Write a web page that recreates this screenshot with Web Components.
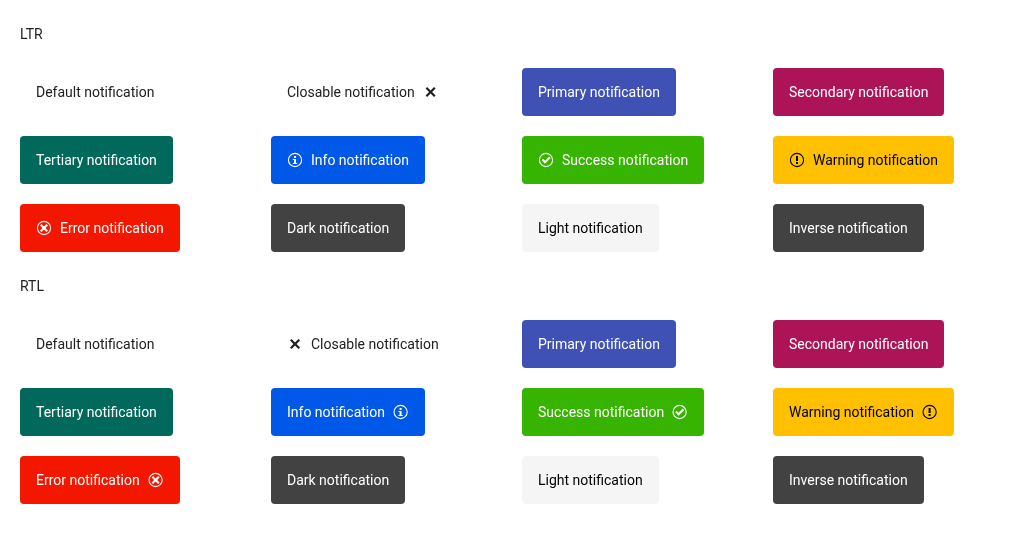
<!DOCTYPE html>
<html lang="en"><head><meta charset="utf-8"><title>Notifications</title>
<style>body{margin:0;background:#fff}</style></head><body>
<notification-demo></notification-demo>
<script>
const ring='<circle cx="8" cy="8" r="6.600" fill="none" stroke="currentColor" stroke-width="1.100"/>';
const icons={
info:'<path d="M7 4h2v2H7zM10.200 12H5.800v-1H7V8H5.800V7H9v4h1.200z"/>',
success:'<path d="M7 11.700 3.600 8.300 5.100 6.800 7 8.700l4.200-4.200 1.500 1.500z"/>',
warning:'<path d="M7 4h2v5H7zM7 10h2v2H7z"/>',
error:'<path d="M12 5.500 10.500 4 8 6.500 5.500 4 4 5.500 6.500 8 4 10.500 5.500 12 8 9.500l2.500 2.500 1.500-1.500L9.500 8z"/>'};
const colors={
plain:['transparent','#212121'],primary:['#3f51b5','#fff'],secondary:['#ad1457','#fff'],tertiary:['#00695c','#fff'],
info:['#0058e9','#fff'],success:['#37b400','#fff'],warning:['#ffc000','#000'],error:['#f31700','#fff'],
dark:['#424242','#fff'],light:['#f5f5f5','#000']};
class NoticeIcon extends HTMLElement{connectedCallback(){
const n=this.getAttribute('name');
this.attachShadow({mode:'open'}).innerHTML=`<style>:host{display:block;width:16px;height:16px;flex:none}svg{display:block;fill:currentColor}</style><svg width="16" height="16" viewBox="0 0 16 16">${n==='close'?'<path d="M13 4.550 11.450 3 8 6.450 4.550 3 3 4.550 6.450 8 3 11.450 4.550 13 8 9.550l3.450 3.450 1.550-1.550L9.550 8z"/>':ring+icons[n]}</svg>`;
}}
class NoticeBox extends HTMLElement{connectedCallback(){
const t=this.getAttribute('tone'),[bg,fg]=colors[t];
this.attachShadow({mode:'open'}).innerHTML=`<style>:host{display:flex;align-items:center;gap:8px;box-sizing:border-box;height:48px;width:max-content;padding:0 16px;border-radius:4px;background:${bg};color:${fg}}span{white-space:nowrap}:host([dir=ltr]) notice-icon[name=close],:host([dir=rtl]) notice-icon:not([name=close]){transform:translateX(-.4px)}</style>${icons[t]?`<notice-icon name="${t}"></notice-icon>`:''}<span><slot></slot></span>${this.hasAttribute('closable')?'<notice-icon name="close"></notice-icon>':''}`;
}}
class NotificationDemo extends HTMLElement{connectedCallback(){
const items=[['plain','Default'],['plain','Closable'],['primary','Primary'],['secondary','Secondary'],['tertiary','Tertiary'],['info','Info'],['success','Success'],['warning','Warning'],['error','Error'],['dark','Dark'],['light','Light'],['dark','Inverse']];
const grid=d=>`<section><h2>${d.toUpperCase()}</h2><div class="grid">${items.map(([t,n])=>`<div class="cell"><notice-box dir="${d}" tone="${t}" ${n==='Closable'?'closable':''}>${n} notification</notice-box></div>`).join('')}</div></section>`;
this.attachShadow({mode:'open'}).innerHTML=`<style>:host{display:block;padding:24px 0 0 20px;font:14px/20px Roboto,sans-serif;color:#212121;will-change:opacity}h2{font:inherit;margin:0 0 24px}.grid{display:grid;grid-template-columns:repeat(4,251px);grid-auto-rows:48px;gap:20px 0}section+section{margin-top:24px}</style>${grid('ltr')}${grid('rtl')}`;
}}
customElements.define('notice-icon',NoticeIcon);
customElements.define('notice-box',NoticeBox);
customElements.define('notification-demo',NotificationDemo);
</script></body></html>
